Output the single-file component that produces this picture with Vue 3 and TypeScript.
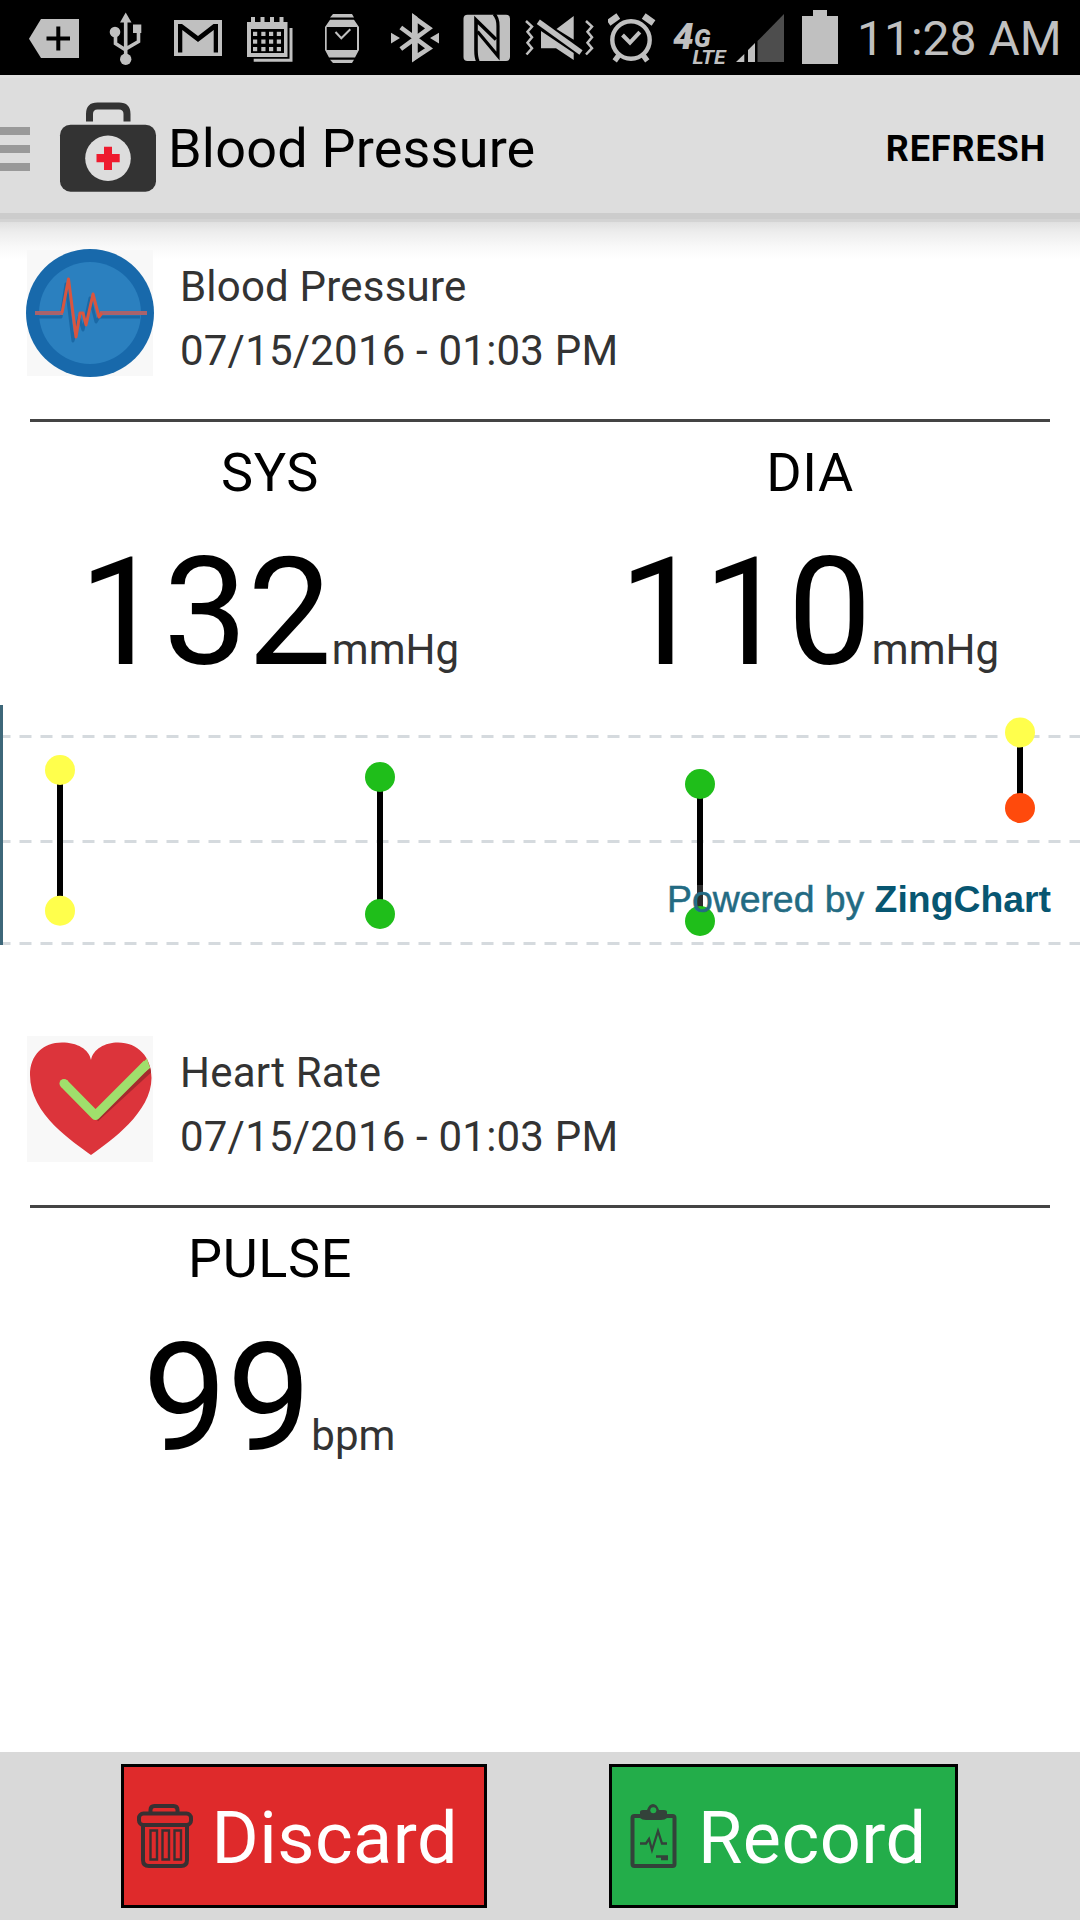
<script setup lang="ts">
interface Reading { label: string; value: string; unit: string }
interface Vital { id: string; name: string; time: string; readings: Reading[] }
interface Point { x: number; high: number; low: number; highColor: string; lowColor: string }

const vitals: Vital[] = [
  {
    id: 'bp',
    name: 'Blood Pressure',
    time: '07/15/2016 - 01:03 PM',
    readings: [
      { label: 'SYS', value: '132', unit: 'mmHg' },
      { label: 'DIA', value: '110', unit: 'mmHg' },
    ],
  },
  {
    id: 'hr',
    name: 'Heart Rate',
    time: '07/15/2016 - 01:03 PM',
    readings: [{ label: 'PULSE', value: '99', unit: 'bpm' }],
  },
]

const yellow = '#ffff4c'
const green = '#1fbe1a'
const gridLines = [31.5, 136.5, 238.5]
const points: Point[] = [
  { x: 60, high: 65, low: 205.7, highColor: yellow, lowColor: yellow },
  { x: 380, high: 72, low: 209, highColor: green, lowColor: green },
  { x: 700, high: 79, low: 216, highColor: green, lowColor: green },
  { x: 1020, high: 27.4, low: 103, highColor: yellow, lowColor: '#ff4a0c' },
]
const calX = [253, 261.3, 269, 276.8]
const calY = [31.8, 39.5, 47]
const tabX = [251, 260.5, 270, 279.5]
</script>

<template>
  <div class="screen">
    <div class="status">
      <svg width="90" height="75" viewBox="0 0 90 75">
        <path d="M29 38.7L41 19H79V58H41Z" />
        <path class="cut" d="M46.5 38.5H70M58.3 26.5V50.5" stroke-width="4" />
      </svg>
      <svg width="70" height="75" viewBox="90 0 70 75">
        <circle cx="125.7" cy="59.3" r="5.7" /><circle cx="115" cy="32" r="5.3" />
        <path d="M125.7 12.5L131.5 22.5H120Z" /><path d="M133 24.5H141.3V33H133Z" />
        <path class="line" d="M125.7 20V58M115.5 34V43.5L125.7 50M138.5 32V41.5L125.7 49" stroke-width="3.6" />
      </svg>
      <svg width="75" height="75" viewBox="160 0 75 75">
        <path d="M174 20H222V56H174Z" />
        <path fill="#000" d="M178 24H182L198 36L213.5 24H218V52.5H213.7V30L198 42L182.3 30V52.5H178Z" />
      </svg>
      <svg width="75" height="75" viewBox="235 0 75 75">
        <path d="M247 22H287.5V57H247Z" />
        <rect v-for="x in tabX" :key="x" :x="x" y="17" width="4" height="6" />
        <path fill="#000" d="M251 29H284V53H251Z" />
        <template v-for="y in calY" :key="y">
          <rect v-for="x in calX" :key="x" :x="x" :y="y" width="4.2" height="4.2" />
        </template>
        <path class="line" d="M291 28V60.3H253.7" stroke-width="3" />
      </svg>
      <svg width="65" height="75" viewBox="310 0 65 75">
        <path d="M333 14H352L354 17.5H330ZM330 19.7H354L359 27V50L355 57.5H329L325 50V27ZM330 59.7H354L352 63H333Z" />
        <path fill="#000" d="M326.7 27H357V50H326.7Z" />
        <path class="line" d="M335.5 32L341.3 38.3L350.3 29.3" stroke-width="2" />
      </svg>
      <svg width="77" height="75" viewBox="375 0 77 75">
        <path class="line" d="M400.8 27.5L429 48.5L415.2 57.5V18.5L429 28.3L400.8 49" stroke-width="4.6" />
        <path d="M412 13L417.5 17V58L412 62.5Z" />
        <path d="M391 32.7L400 38L391 43.5ZM439 32.7L430 38L439 43.5Z" />
      </svg>
      <svg width="63" height="75" viewBox="452 0 63 75">
        <rect x="463.5" y="14.7" width="46.5" height="46.3" rx="4" />
        <path class="cut" d="M478 61.5Q476 58 476 50V20L496 39.5" stroke-width="3.6" />
        <path class="cut" d="M494 14Q498 18 498 26V56L477.5 31.5" stroke-width="3.2" />
      </svg>
      <svg width="93" height="75" viewBox="515 0 93 75">
        <path d="M556.5 29L573.7 16V39.8ZM541 31V48.3H556L573.7 60V53Z" />
        <path class="line" d="M538.3 21.8L581 52.5" stroke-width="5.4" />
        <path class="line" d="M526 21L532 26.5L527.5 31.7L532 37.3L527.5 42.8L532 48.2L526.5 54.5M586 21L592 26.5L587.5 31.7L592 37.3L587.5 42.8L592 48.2L586 54.5" stroke-width="2.5" />
      </svg>
      <svg width="57" height="75" viewBox="608 0 57 75">
        <circle class="line" cx="631" cy="40" r="18.7" stroke-width="4.4" />
        <path class="line" d="M622.5 35L630 42.7L639.8 32.2" stroke-width="4" />
        <path class="line" d="M608.5 23L618.3 16M643.7 16L653.5 23" stroke-width="6.5" />
        <path class="line" d="M619 55L614.7 60.8M643 55L647.3 60.8" stroke-width="5.4" />
      </svg>
      <svg width="65" height="75" viewBox="665 0 65 75">
        <text class="net" y="49.3"><tspan x="673" font-size="37">4</tspan><tspan x="694" y="46.7" font-size="25">G</tspan></text>
        <text class="net lte" x="692.5" y="63.5" font-size="20" textLength="33" lengthAdjust="spacingAndGlyphs">LTE</text>
      </svg>
      <svg width="60" height="75" viewBox="730 0 60 75">
        <path d="M736 62L744.3 54V62ZM748 50L755 43V62H748Z" />
        <path fill="#4d4d4d" d="M757.5 41L784 14V62H757.5Z" />
      </svg>
      <svg width="67" height="75" viewBox="790 0 67 75">
        <path d="M802 16H813V10H827V16H838V64H802Z" />
      </svg>
      <span class="clock">11:28 AM</span>
    </div>

    <header class="appbar">
      <svg width="168" height="138" viewBox="0 75 168 138">
        <path fill="#999" d="M0 127H30V135H0ZM0 145H30V153H0ZM0 163H30V171H0Z" />
        <path fill="none" stroke="#333" stroke-width="7" d="M89.5 121.5V114Q89.5 106 97.5 106H119Q127 106 127 114V121.5" />
        <rect x="60" y="124.7" width="96" height="67" rx="10.5" fill="#333" />
        <circle cx="108" cy="158.3" r="22.8" fill="#ddd" />
        <path fill="#ee1b2e" d="M104 146.7H112V154H119.7V162.3H112V170H104V162.3H96.5V154H104Z" />
      </svg>
      <h1>Blood Pressure</h1>
      <button class="refresh">REFRESH</button>
    </header>
    <div class="edge"></div>

    <main>
      <section v-for="v in vitals" :key="v.id" class="vital">
        <div class="head">
          <svg v-if="v.id === 'bp'" width="128" height="128" viewBox="0 0 128 128">
            <rect x="1" y="1" width="126" height="126" fill="#f8f8f8" />
            <circle cx="64" cy="64" r="64" fill="#1869ab" />
            <circle cx="64" cy="64" r="51" fill="#2b80bf" />
            <g fill="none" stroke-linejoin="round">
              <path d="M13 68H35L40 35L47 92L53 68L57 81L64 49L70 73L73 68H114" stroke="#1b69a6" stroke-width="3" />
              <path d="M9 64H37M74 64H121" stroke="#a9636c" stroke-width="4" />
              <path d="M36 64L42.5 30L50 88L54 64H57L60 76L67 45L73 68L76 64" stroke="#d9553f" stroke-width="3" />
            </g>
          </svg>
          <svg v-else width="128" height="128" viewBox="0 0 128 128">
            <defs>
              <clipPath id="heart">
                <path d="M65 120C48 107 4 80 4 40C4 20 17 7.5 36 7.5C51 7.5 63 14 65 25C67 14 79 7.5 92 7.5C112 7.5 125.5 22 125.5 43C125.5 77 85 106 65 120Z" />
              </clipPath>
            </defs>
            <rect x="1" y="1" width="126" height="126" fill="#f8f8f8" />
            <g clip-path="url(#heart)">
              <rect width="128" height="128" fill="#dc343b" />
              <path d="M70 84L130 29" fill="none" stroke="#a52a2d" stroke-width="6" />
            </g>
            <path d="M38 48.5L69.5 80.5L121 29" fill="none" stroke="#a0df6c" stroke-width="9" stroke-linejoin="round" />
            <circle cx="38" cy="48.5" r="4.5" fill="#a0df6c" />
            <path d="M114 30L121 23.5L124 33L119 37Z" fill="#a0df6c" />
          </svg>
          <div class="meta">
            <div>{{ v.name }}</div>
            <div>{{ v.time }}</div>
          </div>
        </div>
        <hr />
        <div class="readings">
          <div v-for="r in v.readings" :key="r.label" class="reading">
            <div class="label">{{ r.label }}</div>
            <div class="value">{{ r.value }}<span class="unit">{{ r.unit }}</span></div>
          </div>
        </div>
        <svg v-if="v.id === 'bp'" class="chart" width="1080" height="240" viewBox="0 0 1080 240">
          <line v-for="y in gridLines" :key="y" x1="-1.5" x2="1080" :y1="y" :y2="y" stroke="#d5dade" stroke-width="3" stroke-dasharray="12 9" />
          <rect width="3" height="240" fill="#3d6779" />
          <g v-for="p in points" :key="p.x">
            <line :x1="p.x" :x2="p.x" :y1="p.high" :y2="p.low" stroke="#000" stroke-width="6" />
            <circle :cx="p.x" :cy="p.high" r="15" :fill="p.highColor" />
            <circle :cx="p.x" :cy="p.low" r="15" :fill="p.lowColor" />
          </g>
          <rect x="690" y="180" width="20" height="21" fill="#fff" opacity=".17" />
          <text class="brand" x="667" y="207" textLength="384" lengthAdjust="spacingAndGlyphs"><tspan class="by">Powered by </tspan><tspan class="zing">ZingChart</tspan></text>
        </svg>
      </section>
    </main>

    <footer>
      <button class="action discard">
        <svg width="64" height="64" viewBox="0 0 64 64" fill="none" stroke="#383032" stroke-width="4">
          <path d="M17.5 9V6Q17.5 2 21.5 2H40.5Q44.5 2 44.5 6V9" />
          <rect x="6" y="9.5" width="52" height="11.5" rx="4.5" />
          <path d="M10 21V56Q10 62 16 62H48Q54 62 54 56V21" />
          <path stroke-width="2.4" d="M17.5 26.5H24V55.5H17.5ZM29.5 26.5H36V55.5H29.5ZM41.5 26.5H48V55.5H41.5Z" />
        </svg>
        <span>Discard</span>
      </button>
      <button class="action record">
        <svg width="64" height="64" viewBox="0 0 64 64" fill="none" stroke="#33423a">
          <rect x="11.5" y="12" width="42" height="50" rx="2" stroke-width="4" />
          <path fill="#33423a" d="M19 14V8Q19 6 22 6H26Q28 0 32 0Q36 0 38 6H43Q46 6 46 8V14Q44 16 40 16H25Q21 16 19 14Z" stroke="none" />
          <circle cx="32.3" cy="6.3" r="3" fill="#23ad4a" stroke="none" />
          <path stroke-width="2.3" d="M19 39.5H25L28 35L31 46L37 27L41 39.5H46M35 52.5H47M40 55H47" />
        </svg>
        <span>Record</span>
      </button>
    </footer>
  </div>
</template>

<style>
body { margin: 0; background: #fff; }
</style>

<style scoped>
.screen {
  width: 1080px;
  height: 1920px;
  display: flex;
  flex-direction: column;
  overflow: hidden;
  background: #fff;
  color: #000;
  font-family: Roboto, "Noto Sans", sans-serif;
}
svg { display: block; flex: none; }
button { margin: 0; font-family: inherit; }
.status { height: 75px; flex: none; display: flex; background: #000; fill: #c0c0c0; }
.line { fill: none; stroke: #c0c0c0; }
.cut { fill: none; stroke: #000; }
.net { font-weight: 900; font-style: italic; }
.lte { font-weight: 700; }
.clock { color: #c0c0c0; font-size: 48px; line-height: 77px; white-space: nowrap; }
.appbar { height: 138px; flex: none; display: flex; align-items: center; background: #ddd; box-shadow: inset 0 3px #e0e0e0; }
h1 { margin: 10px 0 0; font-size: 54px; line-height: 64px; font-weight: 400; letter-spacing: .2px; }
.refresh { margin: 10px 34px 0 auto; padding: 0; border: 0; background: none; color: #000; font-size: 36px; line-height: 48px; font-weight: 700; letter-spacing: .9px; }
.edge {
  height: 48px;
  margin-bottom: -12px;
  flex: none;
  background: linear-gradient(#ccc 0 6px, #d3d3d3 6px 9px, #e0e0e0 9px, #ededed 19px, #f8f8f8 33px, #fff 46px);
}
main { flex: 1; min-height: 0; }
.vital { height: 786px; }
.head { display: flex; height: 128px; padding-left: 26px; }
.meta { padding: 6px 0 0 26px; color: #333; font-size: 42px; line-height: 64px; letter-spacing: .2px; white-space: nowrap; }
hr { margin: 42px 30px 0; border: 0; height: 3px; background: #444; }
.readings { display: flex; padding-top: 19px; }
.reading { width: 540px; text-align: center; }
.label { font-size: 54px; line-height: 64px; letter-spacing: .6px; }
.value { margin: 28px 2px 0 0; font-size: 150px; line-height: 160px; height: 160px; white-space: nowrap; }
.unit { color: #333; font-size: 42px; line-height: 1; }
.chart { margin-top: 12px; }
.brand { font-family: "Liberation Sans", Arial, sans-serif; font-size: 37px; stroke-width: .5px; }
.by { fill: #236b83; stroke: #236b83; }
.zing { fill: #075671; font-weight: 700; }
footer { height: 168px; flex: none; display: flex; align-items: center; gap: 122px; padding-left: 121px; background: #d9d9d9; box-sizing: border-box; }
.action {
  box-sizing: border-box;
  height: 144px;
  display: flex;
  align-items: center;
  gap: 13px;
  padding: 0 0 0 9px;
  border: 3px solid #000;
  color: #fff;
  font-size: 72px;
  line-height: 84px;
  letter-spacing: .5px;
}
.action span { padding-top: 6px; }
.discard { width: 366px; background: #df2a2b; }
.discard span { padding-left: 1.5px; }
.record { width: 349px; background: #23ad4a; }
</style>
